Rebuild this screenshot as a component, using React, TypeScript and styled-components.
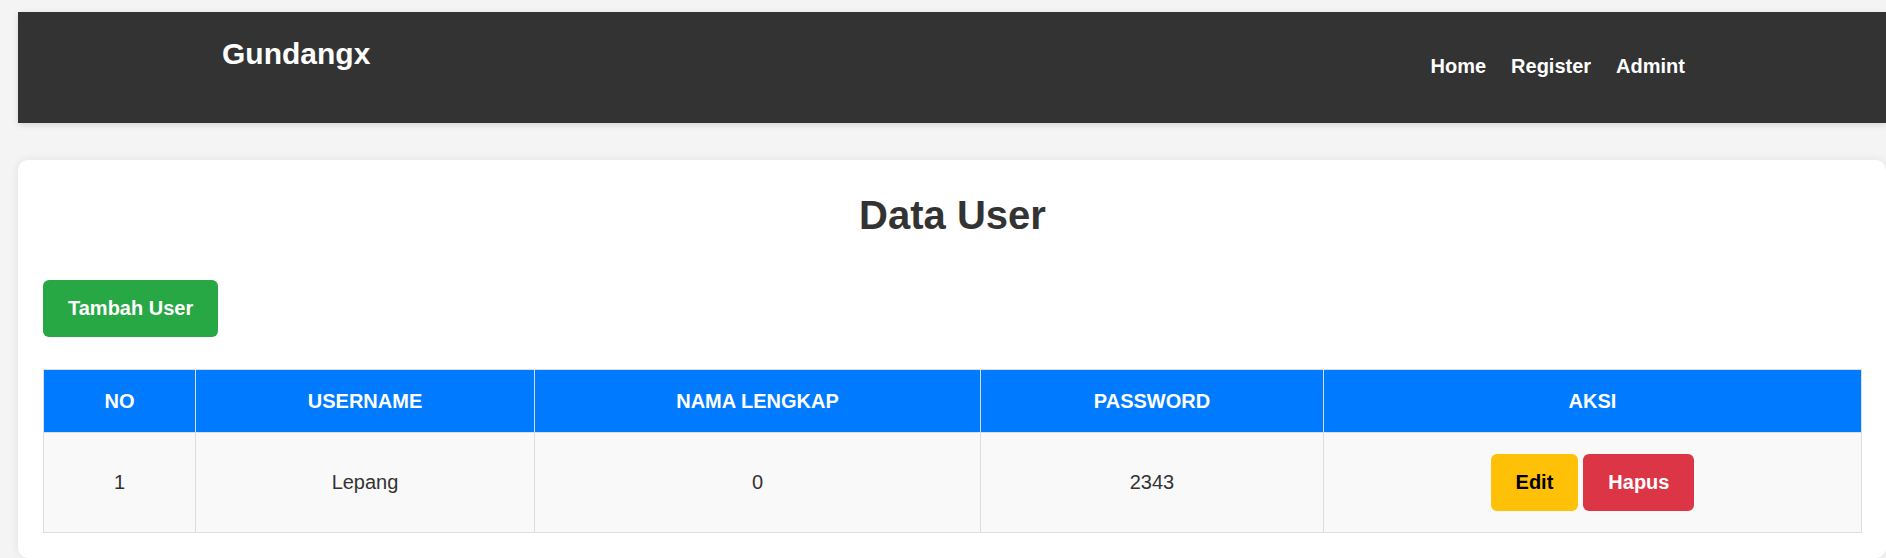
import React from "react";
import styled, { createGlobalStyle } from "styled-components";

const GlobalStyle = createGlobalStyle`
  html, body {
    margin: 0;
    padding: 0;
    background: #f4f4f4;
    font-family: "Liberation Sans", Arial, sans-serif;
  }
  * { box-sizing: border-box; }
`;

const Page = styled.div`
  padding: 12px 0 0 18px;
  display: flex;
  flex-direction: column;
  gap: 37px;
`;

const Header = styled.header`
  height: 111px;
  background: #333;
  color: #fff;
  box-shadow: 0 2px 6px rgba(0, 0, 0, 0.12);
  display: flex;
  justify-content: space-between;
  align-items: flex-start;
  padding: 25px 201px 0 204px;
`;

const Brand = styled.h1`
  margin: 0;
  font-size: 30px;
  line-height: 34px;
  font-weight: 700;
`;

const Nav = styled.nav`
  display: flex;
  gap: 25px;
  margin-top: 18px;
`;

const NavLink = styled.a`
  color: #fff;
  text-decoration: none;
  font-size: 20px;
  line-height: 23px;
  font-weight: 700;
`;

const Card = styled.main`
  background: #fff;
  border-radius: 10px;
  box-shadow: 0 0 10px rgba(0, 0, 0, 0.08);
  padding: 25px 24px 25px 25px;
  min-height: 398px;
`;

const Title = styled.h2`
  margin: 7px 0 42px;
  text-align: center;
  font-size: 40px;
  line-height: 46px;
  font-weight: 700;
  color: #333;
`;

const Button = styled.button<{ $bg: string; $fg: string }>`
  display: inline-flex;
  align-items: center;
  justify-content: center;
  height: 57px;
  padding: 0 25px;
  border: none;
  border-radius: 6px;
  background: ${(p) => p.$bg};
  color: ${(p) => p.$fg};
  font-family: "Liberation Sans", Arial, sans-serif;
  font-size: 20px;
  font-weight: 700;
  cursor: pointer;
`;

const Table = styled.table`
  width: 100%;
  margin-top: 32px;
  border-collapse: collapse;
  table-layout: fixed;
  font-size: 20px;
`;

const Th = styled.th`
  background: #007bff;
  color: #fff;
  font-weight: 700;
  border: 1px solid #ddd;
  padding: 20px;
  line-height: 22px;
  text-align: center;
`;

const Td = styled.td`
  background: #f9f9f9;
  color: #333;
  border: 1px solid #ddd;
  padding: 21px 20px;
  line-height: 23px;
  text-align: center;
`;

const Actions = styled.div`
  display: flex;
  justify-content: center;
  gap: 5px;
`;

const columns = [
  { label: "NO", width: 152 },
  { label: "USERNAME", width: 339 },
  { label: "NAMA LENGKAP", width: 446 },
  { label: "PASSWORD", width: 343 },
  { label: "AKSI", width: undefined as number | undefined },
];

const rows = [{ no: 1, username: "Lepang", nama: "0", password: "2343" }];

export default function App() {
  return (
    <>
      <GlobalStyle />
      <Page>
        <Header>
          <Brand>Gundangx</Brand>
          <Nav>
            <NavLink href="#">Home</NavLink>
            <NavLink href="#">Register</NavLink>
            <NavLink href="#">Admint</NavLink>
          </Nav>
        </Header>
        <Card>
          <Title>Data User</Title>
          <Button $bg="#28a745" $fg="#fff">Tambah User</Button>
          <Table>
            <colgroup>
              {columns.map((c) => (
                <col key={c.label} style={c.width ? { width: c.width } : undefined} />
              ))}
            </colgroup>
            <thead>
              <tr>
                {columns.map((c) => (
                  <Th key={c.label}>{c.label}</Th>
                ))}
              </tr>
            </thead>
            <tbody>
              {rows.map((r) => (
                <tr key={r.no}>
                  <Td>{r.no}</Td>
                  <Td>{r.username}</Td>
                  <Td>{r.nama}</Td>
                  <Td>{r.password}</Td>
                  <Td>
                    <Actions>
                      <Button $bg="#ffc107" $fg="#000">Edit</Button>
                      <Button $bg="#dc3545" $fg="#fff">Hapus</Button>
                    </Actions>
                  </Td>
                </tr>
              ))}
            </tbody>
          </Table>
        </Card>
      </Page>
    </>
  );
}
